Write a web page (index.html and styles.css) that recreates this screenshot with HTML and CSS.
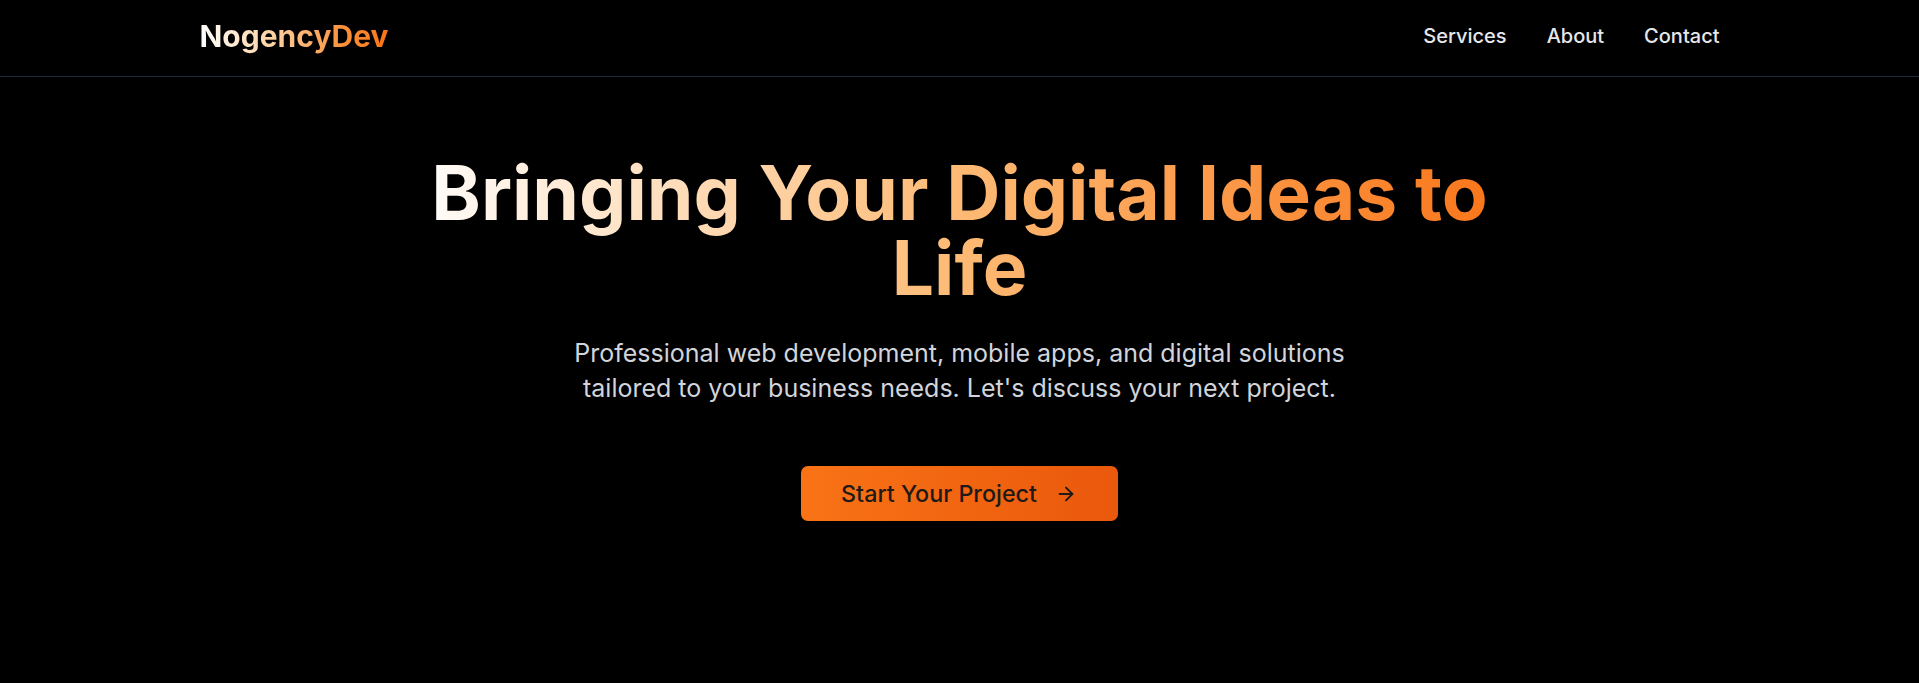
FILE: index.html
```html
<!DOCTYPE html>
<html lang="en">
<head>
<meta charset="utf-8">
<title>NogencyDev</title>
<link rel="stylesheet" href="styles.css">
</head>
<body>
<header class="site-header">
  <div class="container header-inner">
    <a class="logo" href="#">NogencyDev</a>
    <nav class="nav">
      <a href="#services">Services</a>
      <a href="#about">About</a>
      <a href="#contact">Contact</a>
    </nav>
  </div>
</header>
<main class="hero">
  <div class="container hero-inner">
    <h1 class="hero-title">Bringing Your Digital Ideas to Life</h1>
    <p class="hero-text">Professional web development, mobile apps, and digital solutions tailored to your business needs. Let's discuss your next project.</p>
    <a class="cta" href="#contact">
      <span>Start Your Project</span>
      <svg class="cta-icon" viewBox="0 0 24 24" fill="none" stroke="currentColor" stroke-width="2" stroke-linecap="round" stroke-linejoin="round"><path d="M5 12h14"/><path d="m12 5 7 7-7 7"/></svg>
    </a>
  </div>
</main>
</body>
</html>
```

FILE: styles.css
```css
* { box-sizing: border-box; }
html, body { margin: 0; padding: 0; }
body {
  background: #000;
  color: #fff;
  font-family: Inter, "Noto Sans", sans-serif;
  min-height: 683px;
}
a { text-decoration: none; color: inherit; }

.container {
  max-width: 1600px;
  margin: 0 auto;
  padding: 0 40px;
}

.site-header {
  border-bottom: 1px solid #1e293b;
}
.header-inner {
  height: 76px;
  display: flex;
  align-items: center;
  justify-content: space-between;
  padding-bottom: 4px;
}
.logo {
  font-size: 30px;
  line-height: 45px;
  font-weight: 700;
  background: linear-gradient(to right, #ffffff, #fed7aa 35%, #fb923c 75%, #f97316);
  -webkit-background-clip: text;
  background-clip: text;
  color: transparent;
}
.nav {
  display: flex;
  gap: 40px;
}
.nav a {
  font-size: 20px;
  line-height: 30px;
  font-weight: 500;
  color: #e5e7eb;
}

.hero-inner {
  display: flex;
  flex-direction: column;
  align-items: center;
  text-align: center;
  padding-top: 78px;
}
.hero-title {
  margin: 0 0 31px;
  max-width: 1120px;
  font-size: 75px;
  line-height: 75px;
  font-weight: 700;
  background: linear-gradient(to right, #ffffff, #fdba74 50%, #f97316);
  -webkit-background-clip: text;
  background-clip: text;
  color: transparent;
}
.hero-text {
  margin: 0 0 60px;
  max-width: 840px;
  font-size: 25px;
  line-height: 35px;
  color: #d1d5db;
}
.cta {
  display: inline-flex;
  align-items: center;
  gap: 18px;
  padding: 10px 41px 10px 40px;
  border-radius: 7px;
  background: linear-gradient(to right, #f97316, #ea580c);
  color: #1f1a17;
  font-size: 23.3px;
  line-height: 35px;
  font-weight: 500;
}
.cta-icon {
  width: 22px;
  height: 22px;
  flex: none;
}
```
